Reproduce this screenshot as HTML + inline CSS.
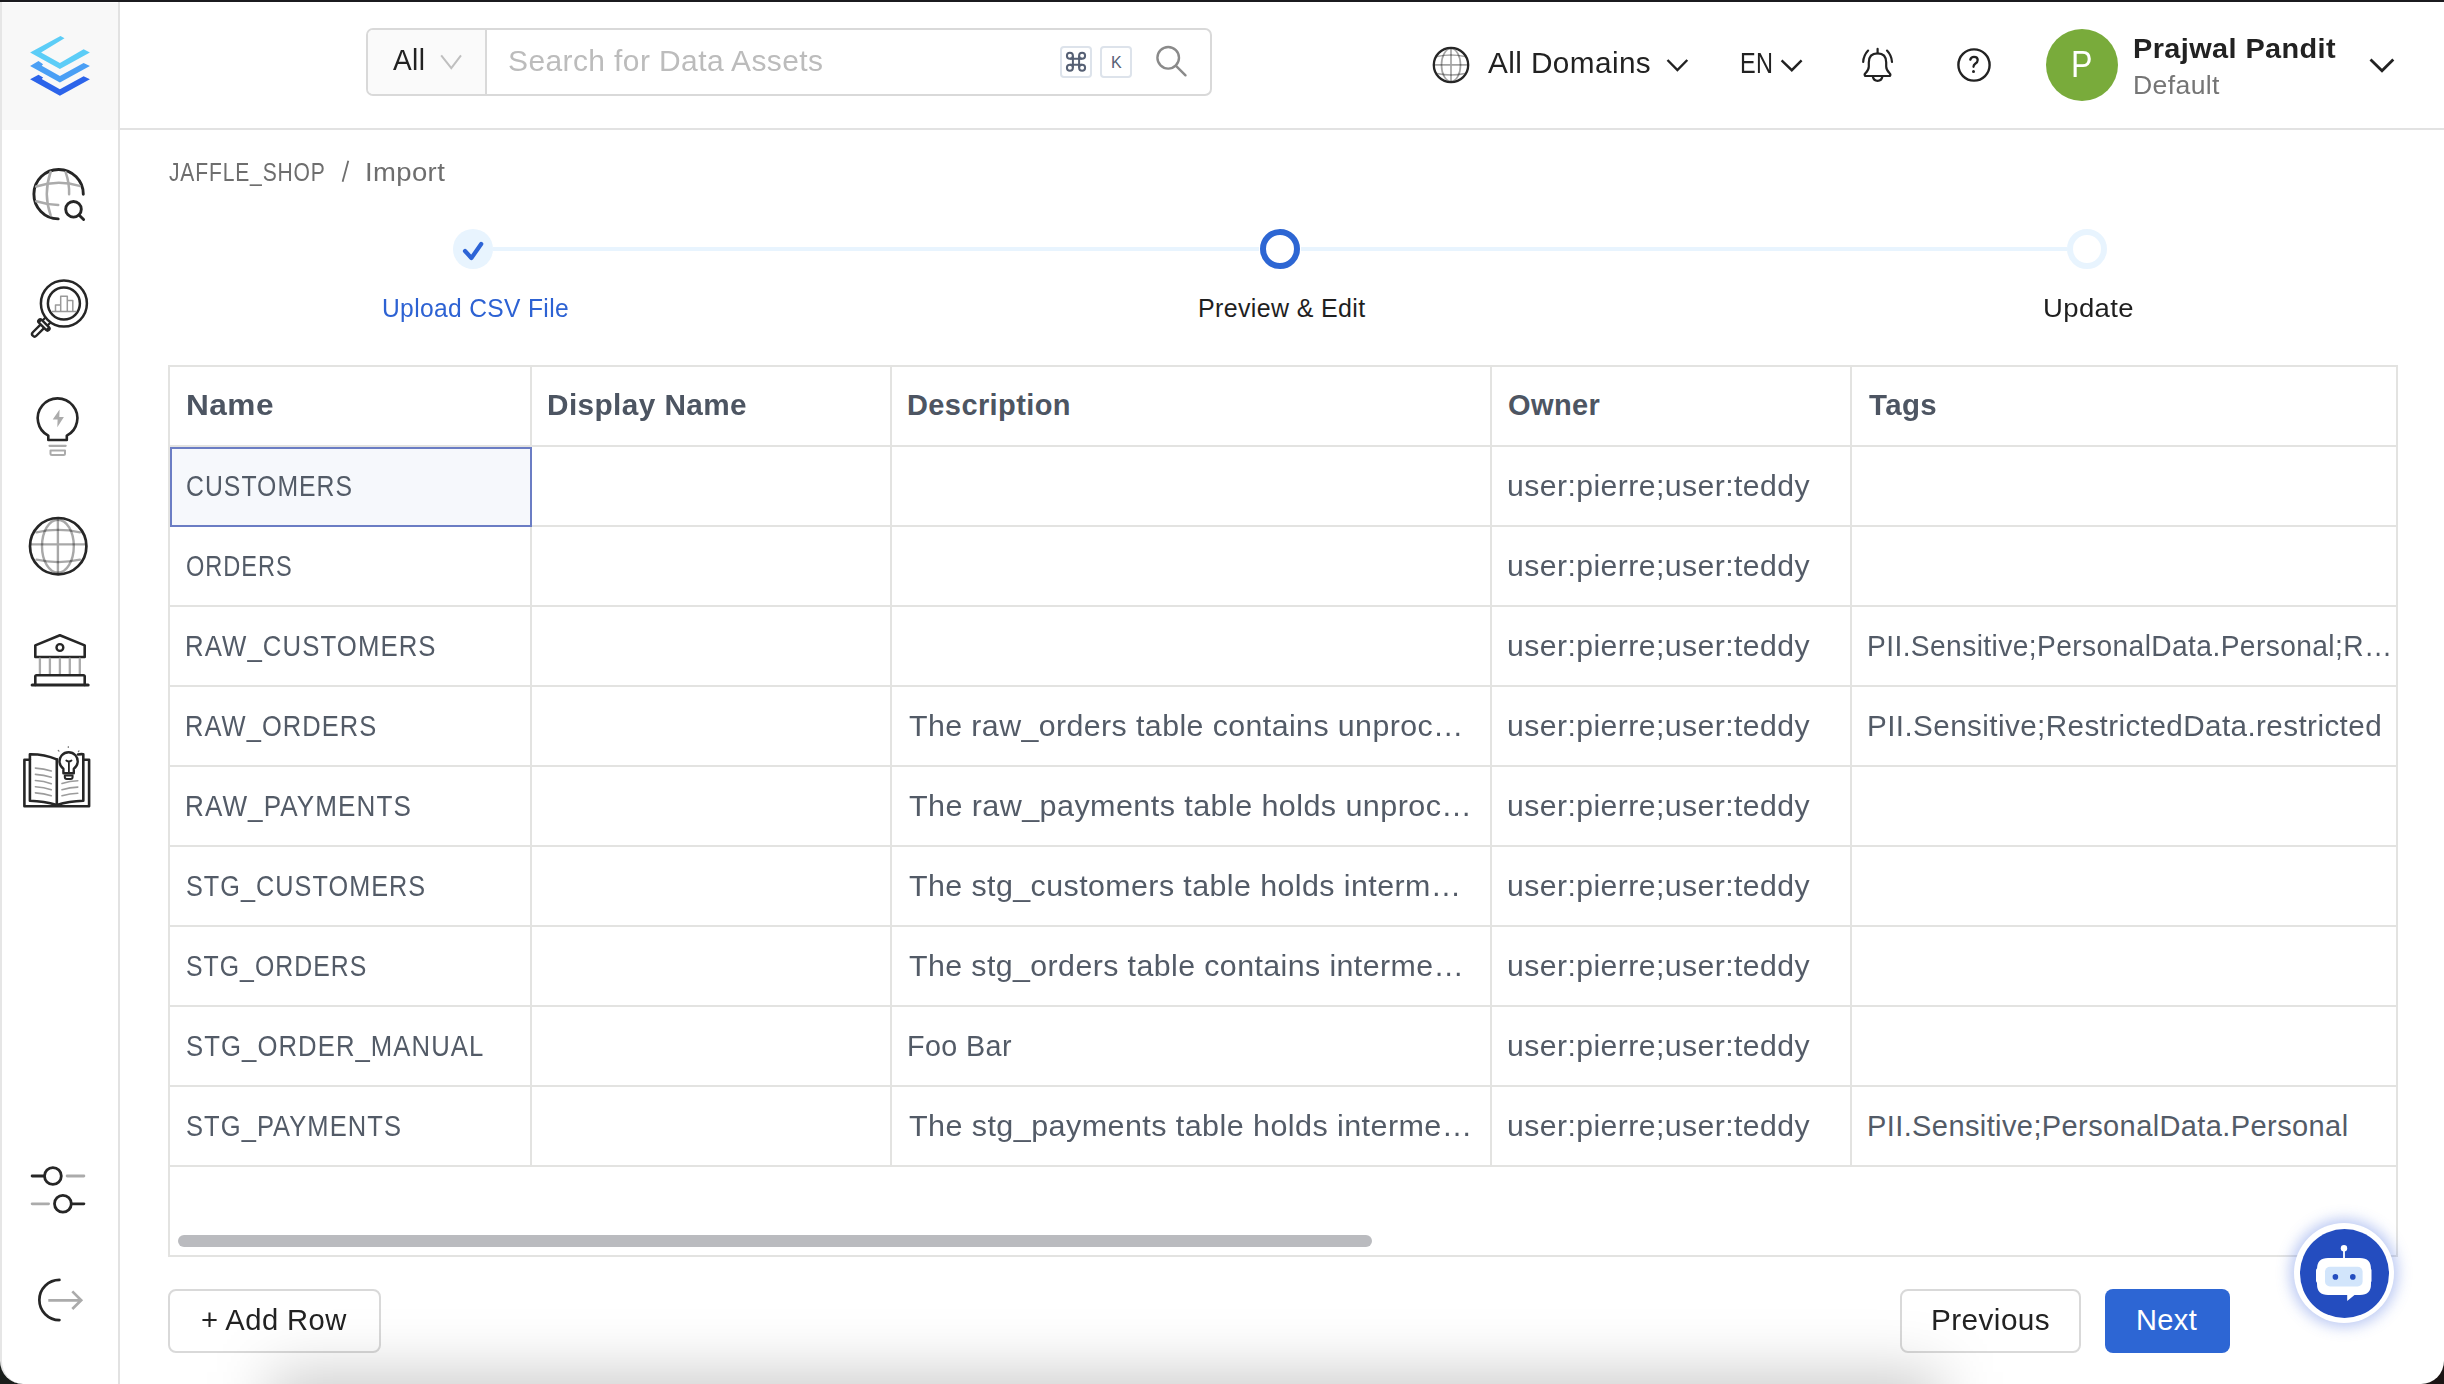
<!DOCTYPE html>
<html><head><meta charset="utf-8"><title>Import</title>
<style>
html,body{margin:0;padding:0;width:2444px;height:1384px;overflow:hidden;background:#fff;}
body{font-family:"Liberation Sans",sans-serif;position:relative;}
.a{position:absolute;box-sizing:content-box;}
.t{position:absolute;white-space:nowrap;line-height:1;}
</style></head><body>
<div class="a" style="left:0;top:0;width:2444px;height:2px;background:#1b1b1f"></div>
<div class="a" style="left:0;top:2px;width:2px;height:1382px;background:#e6e6e6"></div>
<div class="a" style="left:2px;top:3px;width:116px;height:127px;background:#f8f8f8"></div>
<div class="a" style="left:118px;top:2px;width:2px;height:1382px;background:#e2e2e2"></div>
<div class="a" style="left:120px;top:128px;width:2324px;height:2px;background:#e2e2e2"></div>
<svg class="a" style="left:0;top:0" width="120" height="130" viewBox="0 0 120 130">
<polygon fill="#5ccdf7" points="30.1,52.5 60.5,36 64.5,38.3 41.1,52.5 59.9,62.9 83.6,49.3 89.9,52.5 59.9,68.9"/>
<polygon fill="#4a9ff5" points="30.1,66 38.5,61.1 43.1,64.3 41.7,65.8 59.9,75.9 83.6,62.9 89.9,66 59.9,82.5"/>
<polygon fill="#2c64ea" points="30.1,79.3 38.5,74.7 43.1,77.6 41.7,79 59.9,89.2 83.6,76.2 89.9,79.3 59.9,95.8"/>
</svg>
<svg class="a" style="left:0;top:130px" width="118" height="1254" viewBox="0 130 118 1254" fill="none" stroke-linecap="round" stroke-linejoin="round">
<!-- explore globe -->
<path d="M83.3,194.3 A24.7,24.7 0 1 0 58.2,218.9" stroke="#262626" stroke-width="2.9"/>
<path d="M36.2,186.5 Q57.9,179.5 79.5,185.9" stroke="#ababab" stroke-width="2.5"/>
<path d="M36.2,201.2 Q47,204.5 58.2,205" stroke="#ababab" stroke-width="2.5"/>
<path d="M50.6,172 Q43,194 50.6,215.1" stroke="#ababab" stroke-width="2.5"/>
<path d="M65.7,172.3 Q69.5,183 69.1,194.3" stroke="#ababab" stroke-width="2.5"/>
<circle cx="73.5" cy="209.3" r="7.8" stroke="#262626" stroke-width="2.9"/>
<path d="M79.5,215.5 L83.6,219.5" stroke="#262626" stroke-width="2.9"/>
<!-- insights magnifier -->
<circle cx="63.9" cy="303.5" r="23" stroke="#262626" stroke-width="2.5"/>
<circle cx="63.9" cy="303.5" r="16" stroke="#262626" stroke-width="2.5"/>
<path d="M52.4,311.4 H75.8 M55.5,311.4 V305 H60.7 V311.4 M60.7,311.4 V296.3 H67.3 V311.4 M67.3,311.4 V300.6 H72.8 V311.4" stroke="#9a9a9a" stroke-width="1.5"/>
<path d="M45.5,317.5 L42.5,320.5 M50.5,322.5 L47.5,325.5" stroke="#262626" stroke-width="2.2"/>
<path d="M34.6,334 L41.5,327.1" stroke="#262626" stroke-width="7.4"/>
<path d="M34.6,334 L41.5,327.1" stroke="#fff" stroke-width="2.6"/>
<path d="M40.3,321.3 L47.5,328.5" stroke="#262626" stroke-width="6.4"/>
<path d="M40.8,321.8 L47,328" stroke="#fff" stroke-width="1.6" stroke-linecap="butt"/>
<!-- bulb -->
<path d="M48.3,440 V435.7 A19.8,19.8 0 1 1 66.8,435.7 V440 Z" stroke="#262626" stroke-width="2.6"/>
<path d="M49.5,445.8 H65.7" stroke="#ababab" stroke-width="2.2"/>
<path d="M50.5,450.5 H65 V453.5 Q65,455 63.5,455 H52 Q50.5,455 50.5,453.5 Z" stroke="#ababab" stroke-width="2"/>
<polygon points="59.6,409.4 52.7,419.5 57.6,419.5 57.3,427.3 63.9,416.9 59.3,416.9" fill="#ababab" stroke="none"/>
<!-- domains globe -->
<g stroke="rgba(0,0,0,0.34)" stroke-width="2.4">
<path d="M57.9,519 V573.4 M31,544.4 H85.4"/>
<ellipse cx="57.9" cy="546.2" rx="15.9" ry="26.5"/>
<path d="M36.5,532.3 Q58,527.5 80,532.3 M36.5,559.7 Q58,564.5 80,559.7"/>
</g>
<circle cx="58.2" cy="546.2" r="28.2" stroke="#262626" stroke-width="2.7"/>
<!-- governance bank -->
<path d="M35.3,645.4 L59.9,635.3 L84.7,645.4 V657 H35.3 Z" stroke="#262626" stroke-width="2.6"/>
<circle cx="59.9" cy="647.5" r="3.4" stroke="#262626" stroke-width="2.4"/>
<path d="M39.9,658.7 V673.8 M49.9,658.7 V673.8 M59.9,658.7 V673.8 M69.8,658.7 V673.8 M79.8,658.7 V673.8" stroke="#ababab" stroke-width="2.3"/>
<path d="M35.3,685 V676.5 Q35.3,675.2 36.6,675.2 H83.4 Q84.7,675.2 84.7,676.5 V685" stroke="#262626" stroke-width="2.6"/>
<path d="M32.1,685 H88.2" stroke="#262626" stroke-width="3"/>
<!-- knowledge book -->
<path d="M29.9,759.7 H24.4 V806.2 H89.1 V759.7 H83.3" stroke="#262626" stroke-width="2.6"/>
<path d="M56.8,759.4 Q44,754 29.9,754.2 V800.7 Q44,801 56.8,805 Q69,801 83.3,800.7 V754.2 Q80,754 78,754.5" stroke="#262626" stroke-width="2.6"/>
<path d="M56.8,759.4 V805" stroke="#262626" stroke-width="2.6"/>
<path d="M35.4,768.1 Q44,768.5 51.3,771 M35.4,774.4 Q44,774.8 51.3,777.3 M35.4,780.5 Q44,781 51.3,783.7 M35.4,786.8 Q44,787.2 51.3,789.7 M35.4,792.9 Q44,793.3 51.3,795.8" stroke="#9c9c9c" stroke-width="1.6"/>
<path d="M62,783.4 Q70,781 77.8,780.8 M62,789.7 Q70,787.3 77.8,787.1 M62,795.8 Q70,793.4 77.8,793.2" stroke="#9c9c9c" stroke-width="1.6"/>
<path d="M63.4,773.3 V768.8 A9.1,9.1 0 1 1 73.8,768.8 V773.3 Z" stroke="#262626" stroke-width="2.4" fill="#fff"/>
<path d="M64.8,775.5 H72.6 V777 Q72.6,779 70.6,779 H66.8 Q64.8,779 64.8,777 Z" stroke="#262626" stroke-width="2"/>
<path d="M66.3,760.5 Q68.9,762.5 71.5,760.5 M68.9,762 V773" stroke="#262626" stroke-width="1.8"/>
<path d="M58.3,750.5 L59,751.2 M68.3,746.5 V747.5 M79,750.9 L78.4,751.5" stroke="#777" stroke-width="1.2"/>
<!-- settings -->
<path d="M32.1,1176 H44.2" stroke="#262626" stroke-width="2.8"/>
<circle cx="52.9" cy="1176" r="8.4" stroke="#262626" stroke-width="2.8"/>
<path d="M67.1,1176 H83.9 M32.1,1203.8 H48.6" stroke="#ababab" stroke-width="2.8"/>
<circle cx="62.9" cy="1203.8" r="8.4" stroke="#262626" stroke-width="2.8"/>
<path d="M71.5,1203.8 H83.9" stroke="#262626" stroke-width="2.8"/>
<!-- logout -->
<path d="M59.4,1279.9 A20.1,20.1 0 0 0 59.4,1320.1" stroke="#262626" stroke-width="2.7"/>
<path d="M48.3,1300.3 H81 M72.3,1291.4 L81.2,1300.2 L72.3,1309" stroke="#ababab" stroke-width="2.7" stroke-linecap="butt" stroke-linejoin="miter"/>
</svg>
<div class="a" style="left:366px;top:28px;width:842px;height:64px;border:2px solid #d9d9d9;border-radius:7px;background:#fff"></div>
<div class="a" style="left:368px;top:30px;width:117px;height:64px;background:#fafafa;border-radius:5px 0 0 5px"></div>
<div class="a" style="left:485px;top:30px;width:2px;height:64px;background:#d9d9d9"></div>
<div class="t" style="left:393.0px;top:46.4px;font-size:29px;font-weight:400;color:#222;letter-spacing:0.4px;transform:scaleX(0.9677);transform-origin:0 0;">All</div>
<svg class="a" style="left:436px;top:50px" width="30" height="24" viewBox="436 50 30 24" fill="none"><path d="M441.2,55.3 L451.3,68 L461,55.3" stroke="#bfbfbf" stroke-width="2"/></svg>
<div class="t" style="left:508.0px;top:47.2px;font-size:29px;font-weight:400;color:#bcbcbc;letter-spacing:0.4px;transform:scaleX(1.0328);transform-origin:0 0;">Search for Data Assets</div>
<div class="a" style="left:1060px;top:46px;width:28px;height:28px;border:2px solid #dde3eb;border-radius:4px"></div>
<div class="a" style="left:1100px;top:46px;width:28px;height:28px;border:2px solid #dde3eb;border-radius:4px"></div>
<svg class="a" style="left:1060px;top:46px" width="32" height="32" viewBox="1060 46 32 32" fill="none" stroke="#566074" stroke-width="2">
<path d="M1069.9,58.8 H1082.1 M1069.9,64.8 H1082.1 M1072.9,55.8 V67.8 M1079.1,55.8 V67.8"/>
<circle cx="1069.9" cy="55.8" r="3"/><circle cx="1082.1" cy="55.8" r="3"/><circle cx="1069.9" cy="67.8" r="3"/><circle cx="1082.1" cy="67.8" r="3"/>
</svg>
<div class="t" style="left:1111px;top:54.8px;font-size:16px;color:#566074;line-height:16px">K</div>
<svg class="a" style="left:1150px;top:40px" width="44" height="44" viewBox="1150 40 44 44" fill="none" stroke="#8a8a8a" stroke-width="2.4" stroke-linecap="round">
<circle cx="1168.2" cy="57.8" r="10.8"/><path d="M1176,65.8 L1185.5,75.3"/></svg>
<svg class="a" style="left:1428px;top:42px" width="46" height="46" viewBox="1428 42 46 46" fill="none">
<g stroke="rgba(0,0,0,0.36)" stroke-width="1.7">
<path d="M1451,48.5 V81.5 M1434.5,64.8 H1467.5"/>
<ellipse cx="1451" cy="65" rx="9.5" ry="16.5"/>
<path d="M1437,56.5 Q1451,53.5 1465,56.5 M1437,73.5 Q1451,76.5 1465,73.5"/>
</g>
<circle cx="1451" cy="65" r="17.2" stroke="#262626" stroke-width="2.3"/>
</svg>
<div class="t" style="left:1488.0px;top:49.1px;font-size:29px;font-weight:400;color:#222;letter-spacing:0.4px;transform:scaleX(1.0253);transform-origin:0 0;">All Domains</div>
<svg class="a" style="left:1660px;top:52px" width="34" height="26" viewBox="1660 52 34 26" fill="none"><path d="M1667.5,60 L1677.4,70 L1687.3,60" stroke="#222" stroke-width="2.4"/></svg>
<div class="t" style="left:1740.4px;top:49.2px;font-size:29px;font-weight:400;color:#222;letter-spacing:0.4px;transform:scaleX(0.8108);transform-origin:0 0;">EN</div>
<svg class="a" style="left:1776px;top:52px" width="34" height="26" viewBox="1776 52 34 26" fill="none"><path d="M1781.6,60.3 L1791.8,70.2 L1801.6,60.3" stroke="#222" stroke-width="2.4"/></svg>
<svg class="a" style="left:1855px;top:42px" width="46" height="46" viewBox="1855 42 46 46" fill="none" stroke="#222" stroke-width="2.2" stroke-linecap="round" stroke-linejoin="round">
<path d="M1877.6,48.9 V53.2"/>
<path d="M1865.2,76 Q1864,74.5 1865.5,73.2 Q1868.8,70 1868.8,66.5 V62.5 Q1868.8,53.4 1877.6,53.4 Q1886.2,53.4 1886.2,62.5 V66.5 Q1886.2,70 1889.6,73.2 Q1891,74.5 1889.8,76 Z"/>
<path d="M1872.9,76.8 Q1873.6,80.8 1877.6,80.8 Q1881.6,80.8 1882.3,76.8"/>
<path d="M1868.1,50.6 Q1863.5,55.5 1863.2,62"/>
<path d="M1887,50.6 Q1891.6,55.5 1892,62"/>
</svg>
<svg class="a" style="left:1952px;top:43px" width="44" height="44" viewBox="1952 43 44 44" fill="none" stroke="#222" stroke-width="2.4" stroke-linecap="round">
<circle cx="1974" cy="65" r="15.6"/>
<path d="M1970.3,59.6 Q1971,56.8 1974,56.8 Q1977.7,56.8 1977.7,60 Q1977.7,62.2 1975.2,63.8 Q1973.5,65 1973.5,66.8" stroke-width="2.3"/>
</svg>
<div class="a" style="left:1972px;top:69.5px;width:3.4px;height:3.4px;border-radius:50%;background:#222"></div>
<div class="a" style="left:2046px;top:29px;width:72px;height:72px;border-radius:50%;background:#79ab3b"></div>
<div class="t" style="left:2071.3px;top:46.5px;font-size:36px;font-weight:300;color:#fff;letter-spacing:0px;transform:scaleX(0.8947);transform-origin:0 0;">P</div>
<div class="t" style="left:2132.9px;top:34.7px;font-size:28px;font-weight:700;color:#222;letter-spacing:0.4px;transform:scaleX(1.0309);transform-origin:0 0;">Prajwal Pandit</div>
<div class="t" style="left:2132.9px;top:72.8px;font-size:25px;font-weight:400;color:#757575;letter-spacing:0.35px;transform:scaleX(1.0633);transform-origin:0 0;">Default</div>
<svg class="a" style="left:2362px;top:50px" width="40" height="30" viewBox="2362 50 40 30" fill="none"><path d="M2370.5,59.5 L2382,70.8 L2393.3,59.5" stroke="#222" stroke-width="2.8"/></svg>
<div class="t" style="left:169.0px;top:159.8px;font-size:25px;font-weight:400;color:#6e6e6e;letter-spacing:1.0px;transform:scaleX(0.8424);transform-origin:0 0;">JAFFLE_SHOP</div>
<svg class="a" style="left:338px;top:156px" width="16" height="30" viewBox="338 156 16 30" fill="none"><path d="M348.3,160.8 L342.6,181.8" stroke="#6e6e6e" stroke-width="1.8"/></svg>
<div class="t" style="left:364.8px;top:159.8px;font-size:25px;font-weight:400;color:#6e6e6e;letter-spacing:0.35px;transform:scaleX(1.0986);transform-origin:0 0;">Import</div>
<div class="a" style="left:493px;top:247px;width:766px;height:4px;background:#e8f4fe"></div>
<div class="a" style="left:1301px;top:247px;width:766px;height:4px;background:#e8f4fe"></div>
<div class="a" style="left:453px;top:229px;width:40px;height:40px;border-radius:50%;background:#e8f4fe"></div>
<svg class="a" style="left:453px;top:229px" width="40" height="40" viewBox="453 229 40 40" fill="none"><path d="M465,251 L471.4,258 L481.2,244" stroke="#2d64d6" stroke-width="4.2" stroke-linecap="round" stroke-linejoin="round"/></svg>
<div class="a" style="left:1260px;top:229px;width:28px;height:28px;border-radius:50%;border:6px solid #2d66d3"></div>
<div class="a" style="left:2067px;top:229px;width:28px;height:28px;border-radius:50%;border:6px solid #e8f4fe"></div>
<div class="t" style="left:382.0px;top:295.5px;font-size:25px;font-weight:400;color:#2d62d3;letter-spacing:0.35px;transform:scaleX(0.984);transform-origin:0 0;">Upload CSV File</div>
<div class="t" style="left:1198.0px;top:295.5px;font-size:25px;font-weight:400;color:#1f1f1f;letter-spacing:0.35px;transform:scaleX(1.0);transform-origin:0 0;">Preview &amp; Edit</div>
<div class="t" style="left:2042.8px;top:295.5px;font-size:25px;font-weight:400;color:#1f1f1f;letter-spacing:0.35px;transform:scaleX(1.1);transform-origin:0 0;">Update</div>
<div class="a" style="left:168px;top:365px;width:2226px;height:888px;border:2px solid #e3e3e1;background:#fff"></div>
<div class="a" style="left:170px;top:447px;width:358px;height:76px;border:2px solid #6b7dc4;background:#f6f8fc"></div>
<div class="a" style="left:530px;top:367px;width:2px;height:798px;background:#e3e3e1"></div>
<div class="a" style="left:890px;top:367px;width:2px;height:798px;background:#e3e3e1"></div>
<div class="a" style="left:1490px;top:367px;width:2px;height:798px;background:#e3e3e1"></div>
<div class="a" style="left:1850px;top:367px;width:2px;height:798px;background:#e3e3e1"></div>
<div class="a" style="left:170px;top:445px;width:2226px;height:2px;background:#e3e3e1"></div>
<div class="a" style="left:532px;top:525px;width:1864px;height:2px;background:#e3e3e1"></div>
<div class="a" style="left:170px;top:525px;width:362px;height:2px;background:#6b7dc4"></div>
<div class="a" style="left:170px;top:605px;width:2226px;height:2px;background:#e3e3e1"></div>
<div class="a" style="left:170px;top:685px;width:2226px;height:2px;background:#e3e3e1"></div>
<div class="a" style="left:170px;top:765px;width:2226px;height:2px;background:#e3e3e1"></div>
<div class="a" style="left:170px;top:845px;width:2226px;height:2px;background:#e3e3e1"></div>
<div class="a" style="left:170px;top:925px;width:2226px;height:2px;background:#e3e3e1"></div>
<div class="a" style="left:170px;top:1005px;width:2226px;height:2px;background:#e3e3e1"></div>
<div class="a" style="left:170px;top:1085px;width:2226px;height:2px;background:#e3e3e1"></div>
<div class="a" style="left:170px;top:1165px;width:2226px;height:2px;background:#e3e3e1"></div>
<div class="a" style="left:170px;top:445px;width:362px;height:2px;background:#e3e3e1"></div>
<div class="a" style="left:170px;top:447px;width:358px;height:76px;border:2px solid #6b7dc4;background:#f6f8fc"></div>
<div class="t" style="left:185.8px;top:391.1px;font-size:29px;font-weight:700;color:#4d5562;letter-spacing:0.4px;transform:scaleX(1.0909);transform-origin:0 0;">Name</div>
<div class="t" style="left:546.9px;top:391.1px;font-size:29px;font-weight:700;color:#4d5562;letter-spacing:0.4px;transform:scaleX(1.026);transform-origin:0 0;">Display Name</div>
<div class="t" style="left:907.0px;top:391.1px;font-size:29px;font-weight:700;color:#4d5562;letter-spacing:0.4px;transform:scaleX(1.0);transform-origin:0 0;">Description</div>
<div class="t" style="left:1508.0px;top:391.1px;font-size:29px;font-weight:700;color:#4d5562;letter-spacing:0.4px;transform:scaleX(1.0);transform-origin:0 0;">Owner</div>
<div class="t" style="left:1869.0px;top:391.1px;font-size:29px;font-weight:700;color:#4d5562;letter-spacing:0.4px;transform:scaleX(1.0152);transform-origin:0 0;">Tags</div>
<div class="t" style="left:186.1px;top:471.8px;font-size:29px;font-weight:400;color:#535b67;letter-spacing:1.2px;transform:scaleX(0.8542);transform-origin:0 0;">CUSTOMERS</div>
<div class="t" style="left:1506.9px;top:471.8px;font-size:29px;font-weight:400;color:#535b67;letter-spacing:0.4px;transform:scaleX(1.0415);transform-origin:0 0;">user:pierre;user:teddy</div>
<div class="t" style="left:186.2px;top:551.8px;font-size:29px;font-weight:400;color:#535b67;letter-spacing:1.2px;transform:scaleX(0.8125);transform-origin:0 0;">ORDERS</div>
<div class="t" style="left:1506.9px;top:551.8px;font-size:29px;font-weight:400;color:#535b67;letter-spacing:0.4px;transform:scaleX(1.0415);transform-origin:0 0;">user:pierre;user:teddy</div>
<div class="t" style="left:185.2px;top:631.8px;font-size:29px;font-weight:400;color:#535b67;letter-spacing:1.2px;transform:scaleX(0.8889);transform-origin:0 0;">RAW_CUSTOMERS</div>
<div class="t" style="left:1506.9px;top:631.8px;font-size:29px;font-weight:400;color:#535b67;letter-spacing:0.4px;transform:scaleX(1.0415);transform-origin:0 0;">user:pierre;user:teddy</div>
<div class="t" style="left:1867.1px;top:631.8px;font-size:29px;font-weight:400;color:#535b67;letter-spacing:0.4px;transform:scaleX(0.972);transform-origin:0 0;">PII.Sensitive;PersonalData.Personal;R…</div>
<div class="t" style="left:185.2px;top:711.8px;font-size:29px;font-weight:400;color:#535b67;letter-spacing:1.2px;transform:scaleX(0.8785);transform-origin:0 0;">RAW_ORDERS</div>
<div class="t" style="left:909.0px;top:711.8px;font-size:29px;font-weight:400;color:#535b67;letter-spacing:0.4px;transform:scaleX(1.0455);transform-origin:0 0;">The raw_orders table contains unproc…</div>
<div class="t" style="left:1506.9px;top:711.8px;font-size:29px;font-weight:400;color:#535b67;letter-spacing:0.4px;transform:scaleX(1.0415);transform-origin:0 0;">user:pierre;user:teddy</div>
<div class="t" style="left:1867.0px;top:711.8px;font-size:29px;font-weight:400;color:#535b67;letter-spacing:0.4px;transform:scaleX(1.022);transform-origin:0 0;">PII.Sensitive;RestrictedData.restricted</div>
<div class="t" style="left:185.2px;top:791.8px;font-size:29px;font-weight:400;color:#535b67;letter-spacing:1.2px;transform:scaleX(0.8992);transform-origin:0 0;">RAW_PAYMENTS</div>
<div class="t" style="left:909.0px;top:791.8px;font-size:29px;font-weight:400;color:#535b67;letter-spacing:0.4px;transform:scaleX(1.0527);transform-origin:0 0;">The raw_payments table holds unproc…</div>
<div class="t" style="left:1506.9px;top:791.8px;font-size:29px;font-weight:400;color:#535b67;letter-spacing:0.4px;transform:scaleX(1.0415);transform-origin:0 0;">user:pierre;user:teddy</div>
<div class="t" style="left:186.1px;top:871.8px;font-size:29px;font-weight:400;color:#535b67;letter-spacing:1.2px;transform:scaleX(0.87);transform-origin:0 0;">STG_CUSTOMERS</div>
<div class="t" style="left:909.0px;top:871.8px;font-size:29px;font-weight:400;color:#535b67;letter-spacing:0.4px;transform:scaleX(1.0478);transform-origin:0 0;">The stg_customers table holds interm…</div>
<div class="t" style="left:1506.9px;top:871.8px;font-size:29px;font-weight:400;color:#535b67;letter-spacing:0.4px;transform:scaleX(1.0415);transform-origin:0 0;">user:pierre;user:teddy</div>
<div class="t" style="left:186.1px;top:951.8px;font-size:29px;font-weight:400;color:#535b67;letter-spacing:1.2px;transform:scaleX(0.8558);transform-origin:0 0;">STG_ORDERS</div>
<div class="t" style="left:909.0px;top:951.8px;font-size:29px;font-weight:400;color:#535b67;letter-spacing:0.4px;transform:scaleX(1.0455);transform-origin:0 0;">The stg_orders table contains interme…</div>
<div class="t" style="left:1506.9px;top:951.8px;font-size:29px;font-weight:400;color:#535b67;letter-spacing:0.4px;transform:scaleX(1.0415);transform-origin:0 0;">user:pierre;user:teddy</div>
<div class="t" style="left:186.1px;top:1031.8px;font-size:29px;font-weight:400;color:#535b67;letter-spacing:1.2px;transform:scaleX(0.8862);transform-origin:0 0;">STG_ORDER_MANUAL</div>
<div class="t" style="left:907.0px;top:1031.8px;font-size:29px;font-weight:400;color:#535b67;letter-spacing:0.4px;transform:scaleX(0.9903);transform-origin:0 0;">Foo Bar</div>
<div class="t" style="left:1506.9px;top:1031.8px;font-size:29px;font-weight:400;color:#535b67;letter-spacing:0.4px;transform:scaleX(1.0415);transform-origin:0 0;">user:pierre;user:teddy</div>
<div class="t" style="left:186.1px;top:1111.8px;font-size:29px;font-weight:400;color:#535b67;letter-spacing:1.2px;transform:scaleX(0.8802);transform-origin:0 0;">STG_PAYMENTS</div>
<div class="t" style="left:909.0px;top:1111.8px;font-size:29px;font-weight:400;color:#535b67;letter-spacing:0.4px;transform:scaleX(1.0527);transform-origin:0 0;">The stg_payments table holds interme…</div>
<div class="t" style="left:1506.9px;top:1111.8px;font-size:29px;font-weight:400;color:#535b67;letter-spacing:0.4px;transform:scaleX(1.0415);transform-origin:0 0;">user:pierre;user:teddy</div>
<div class="t" style="left:1867.0px;top:1111.8px;font-size:29px;font-weight:400;color:#535b67;letter-spacing:0.4px;transform:scaleX(1.0);transform-origin:0 0;">PII.Sensitive;PersonalData.Personal</div>
<div class="a" style="left:178px;top:1235px;width:1194px;height:12px;border-radius:6px;background:#babbbf"></div>
<div class="a" style="left:168px;top:1289px;width:209px;height:60px;border:2px solid #d9d9d9;border-radius:8px;background:#fff"></div>
<div class="t" style="left:201.0px;top:1305.8px;font-size:29px;font-weight:400;color:#222;letter-spacing:0.4px;transform:scaleX(1.0069);transform-origin:0 0;">+ Add Row</div>
<div class="a" style="left:1900px;top:1289px;width:177px;height:60px;border:2px solid #d9d9d9;border-radius:8px;background:#fff"></div>
<div class="t" style="left:1930.9px;top:1305.8px;font-size:29px;font-weight:400;color:#222;letter-spacing:0.4px;transform:scaleX(1.0265);transform-origin:0 0;">Previous</div>
<div class="a" style="left:2105px;top:1289px;width:125px;height:64px;border-radius:8px;background:#2d66d4"></div>
<div class="t" style="left:2136.0px;top:1305.8px;font-size:29px;font-weight:400;color:#fff;letter-spacing:0.4px;transform:scaleX(1.0);transform-origin:0 0;">Next</div>
<div class="a" style="left:0;top:1250px;width:2444px;height:134px;overflow:hidden"><div class="a" style="left:270px;top:122px;width:1670px;height:80px;background:rgba(0,0,0,0.2);filter:blur(30px)"></div></div>
<div class="a" style="left:2294px;top:1223px;width:100px;height:100px;border-radius:50%;background:#fff;box-shadow:0 0 14px 4px rgba(60,100,220,0.35)"></div>
<div class="a" style="left:2299.5px;top:1228.5px;width:89px;height:89px;border-radius:50%;background:#244dbf"></div>
<svg class="a" style="left:2300px;top:1230px" width="90" height="90" viewBox="2300 1230 90 90">
<path d="M2344,1249 V1259" stroke="#fff" stroke-width="1.8"/>
<circle cx="2344" cy="1248.2" r="3.2" fill="#fff"/>
<rect x="2316" y="1268" width="5" height="15" rx="2.5" fill="#fff"/>
<rect x="2366.5" y="1268" width="5" height="15" rx="2.5" fill="#fff"/>
<path d="M2328,1258 H2360 Q2371,1258 2371,1269 V1284 Q2371,1295 2360,1295 H2354.5 L2347.2,1301 V1295 H2328 Q2317,1295 2317,1284 V1269 Q2317,1258 2328,1258 Z" fill="#fff"/>
<rect x="2325" y="1266.8" width="37.6" height="19.7" rx="5" fill="#d2e5fb"/>
<circle cx="2335.4" cy="1276.9" r="2.8" fill="#244dbf"/>
<circle cx="2352.8" cy="1276.9" r="2.8" fill="#244dbf"/>
</svg>
<div class="a" style="left:0;top:1360px;width:24px;height:24px;background:#1a1f1c"></div>
<div class="a" style="left:0;top:1356px;width:28px;height:28px;background:#fff;border-left:2px solid #e6e6e6;box-sizing:border-box;border-bottom-left-radius:23px"></div>
<div class="a" style="left:2420px;top:1360px;width:24px;height:24px;background:#1a1414"></div>
<div class="a" style="left:2416px;top:1356px;width:28px;height:28px;background:#fff;border-bottom-right-radius:23px"></div>
</body></html>
